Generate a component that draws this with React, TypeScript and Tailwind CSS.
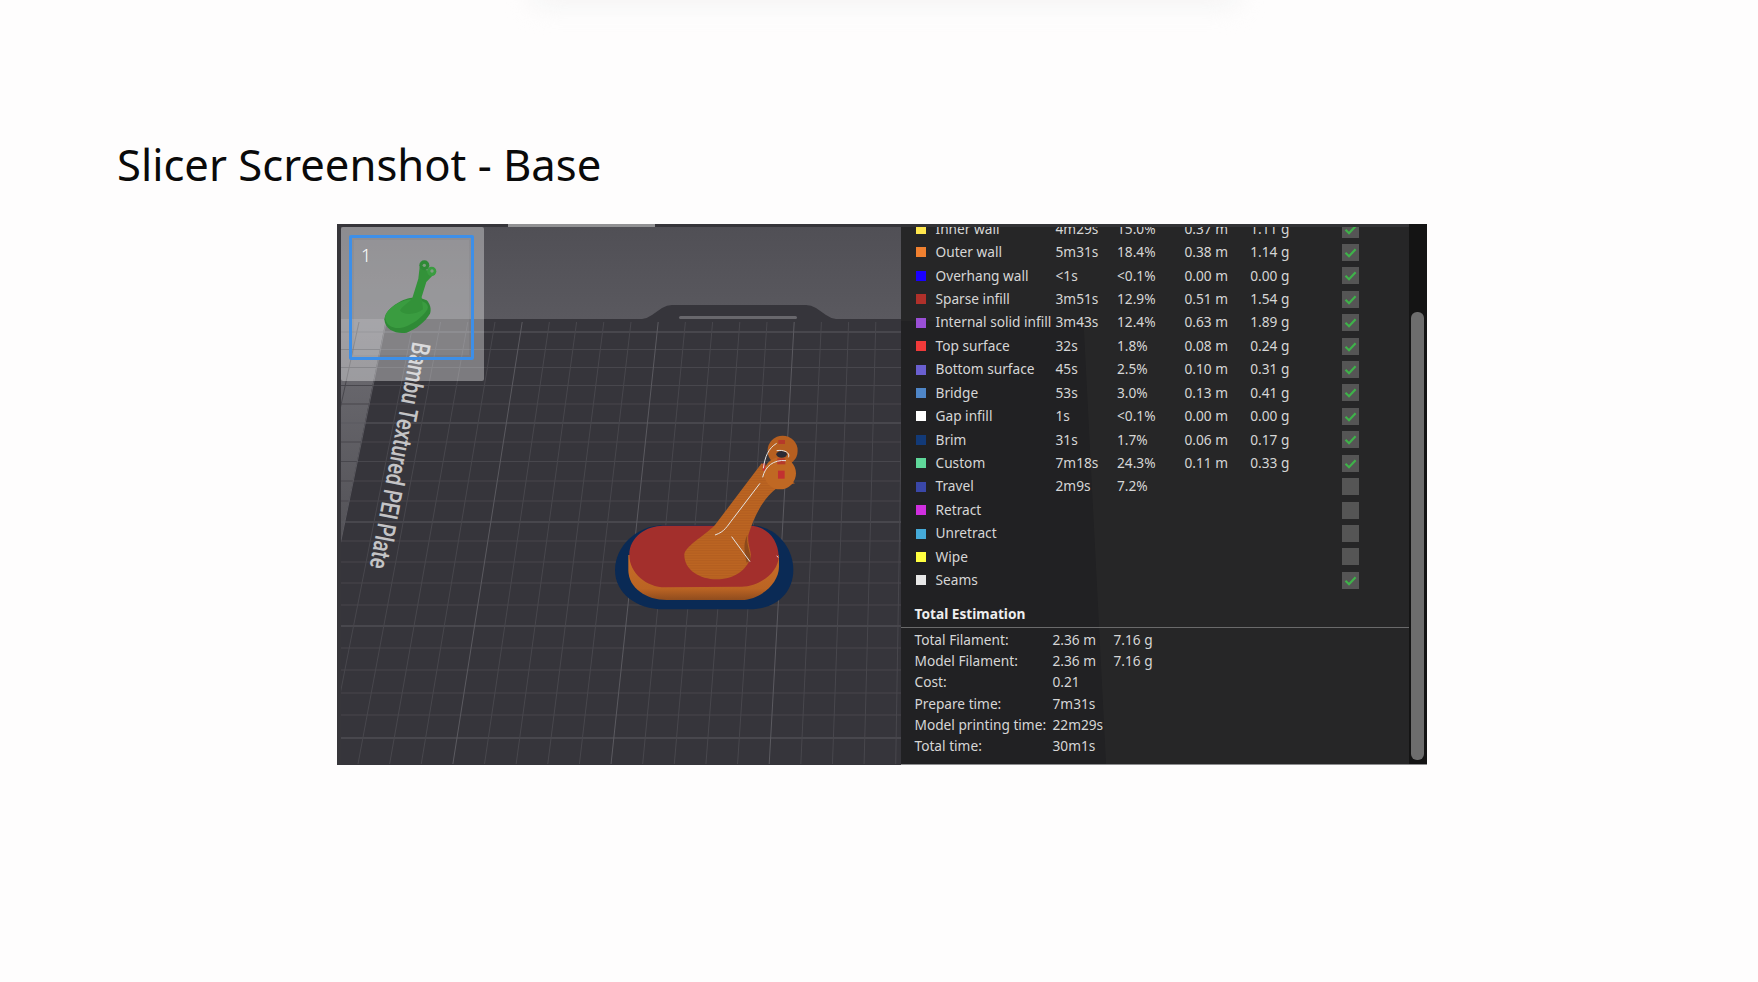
const SANS = "font-['Noto_Sans',sans-serif]";

const rows: [string, string, string, string, string, string, boolean][] = [
  ["Inner wall", "#ffe64d", "4m29s", "15.0%", "0.37 m", "1.11 g", true],
  ["Outer wall", "#f08030", "5m31s", "18.4%", "0.38 m", "1.14 g", true],
  ["Overhang wall", "#1a00ff", "<1s", "<0.1%", "0.00 m", "0.00 g", true],
  ["Sparse infill", "#b0302a", "3m51s", "12.9%", "0.51 m", "1.54 g", true],
  ["Internal solid infill", "#9a4fd6", "3m43s", "12.4%", "0.63 m", "1.89 g", true],
  ["Top surface", "#f03a3a", "32s", "1.8%", "0.08 m", "0.24 g", true],
  ["Bottom surface", "#6a5fd0", "45s", "2.5%", "0.10 m", "0.31 g", true],
  ["Bridge", "#4f86c8", "53s", "3.0%", "0.13 m", "0.41 g", true],
  ["Gap infill", "#ffffff", "1s", "<0.1%", "0.00 m", "0.00 g", true],
  ["Brim", "#123a78", "31s", "1.7%", "0.06 m", "0.17 g", true],
  ["Custom", "#5fd89a", "7m18s", "24.3%", "0.11 m", "0.33 g", true],
  ["Travel", "#3a47a8", "2m9s", "7.2%", "", "", false],
  ["Retract", "#d02fdf", "", "", "", "", false],
  ["Unretract", "#45aad8", "", "", "", "", false],
  ["Wipe", "#ffff40", "", "", "", "", false],
  ["Seams", "#e8e8e8", "", "", "", "", true],
];

const totals: [string, string, string][] = [
  ["Total Filament:", "2.36 m", "7.16 g"],
  ["Model Filament:", "2.36 m", "7.16 g"],
  ["Cost:", "0.21", ""],
  ["Prepare time:", "7m31s", ""],
  ["Model printing time:", "22m29s", ""],
  ["Total time:", "30m1s", ""],
];

const hLines = [332, 349.5, 367.5, 385.5, 404, 423, 442, 461.5, 481, 501, 522, 541, 562, 583, 605, 626, 648, 670, 693, 715, 738];
const vLines = Array.from({ length: 22 }, (_, k) => k - 5);

function Viewport() {
  return (
    <svg viewBox="337 224 564 541" className="block h-[541px] w-[564px]">
      <defs>
        <linearGradient id="upper" x1="0" y1="0" x2="0" y2="1">
          <stop offset="0" stopColor="#504f55" />
          <stop offset="1" stopColor="#5a595f" />
        </linearGradient>
        <linearGradient id="wedge" x1="0" y1="0" x2="0" y2="1">
          <stop offset="0" stopColor="#6f6e74" />
          <stop offset="1" stopColor="#535257" />
        </linearGradient>
        <linearGradient id="side" x1="0" y1="0" x2="0" y2="1">
          <stop offset="0" stopColor="#c86e28" />
          <stop offset="0.75" stopColor="#bb6423" />
          <stop offset="1" stopColor="#8f4c1e" />
        </linearGradient>
        <clipPath id="plate">
          <rect x="341" y="322" width="560" height="443" />
        </clipPath>
        <pattern id="hatch" width="3" height="3" patternUnits="userSpaceOnUse">
          <rect width="3" height="3" fill="#9f2b2b" />
          <rect width="3" height="1" fill="#ab372c" />
        </pattern>
        <pattern id="layers" width="5" height="5" patternUnits="userSpaceOnUse">
          <rect width="5" height="5" fill="#bd6622" />
          <rect width="5" height="1.6" fill="#ad5a1e" />
        </pattern>
      </defs>
      <rect x="337" y="224" width="564" height="541" fill="#36353b" />
      <rect x="337" y="224" width="564" height="95" fill="url(#upper)" />
      <rect x="337" y="224" width="4" height="541" fill="#37363b" />
      <rect x="337" y="224" width="564" height="3" fill="#36353a" />
      <rect x="508" y="224" width="147" height="3" fill="#929294" />
      <polygon points="341,319 386,319 341,540" fill="url(#wedge)" />
      <path d="M642 319 Q648 318 652 315 L662 308 Q667 305 672 305 L806 305 Q811 305 816 308 L826 315 Q830 318 836 319 Z" fill="#36353b" />
      <rect x="679" y="316" width="118" height="3" rx="1.5" fill="#68676c" />
      <g clipPath="url(#plate)" strokeWidth="1" fill="none">
        {hLines.map((y, k) => (
          <line key={y} x1="341" x2="901" y1={y} y2={y} stroke={k % 5 === 0 ? "#5b5a60" : "#48474d"} />
        ))}
        {vLines.map((i) => (
          <line
            key={i}
            x1={495 + 27.2 * i}
            y1="322"
            x2={358 + 31.63 * (i + 2)}
            y2="764"
            stroke={(i + 4) % 5 === 0 ? "#5b5a60" : "#48474d"}
          />
        ))}
      </g>
      <text
        transform="translate(412.7 341) rotate(100.8)"
        textLength="230"
        lengthAdjust="spacingAndGlyphs"
        fontFamily="Roboto, sans-serif"
        fontWeight="500"
        fontSize="26"
        fill="#c4c4c6"
      >
        Bambu Textured PEI Plate
      </text>
      <g transform="translate(600 420) scale(0.3333)">
        <path d="M45 450 C45 380 110 316 190 316 L450 316 C525 316 580 380 580 450 C580 520 525 568 450 568 L190 568 C110 568 45 520 45 450 Z" fill="#0a2a55" />
        <path d="M85 405 L85 450 C85 505 140 540 200 540 L425 540 C480 540 537 490 537 440 L537 405 Z" fill="url(#side)" />
        <path d="M88 405 C88 350 140 317 190 317 L450 317 C500 317 536 360 536 410 C536 455 480 500 425 500 L195 502 C140 502 88 460 88 405 Z" fill="url(#hatch)" />
        <path d="M253 405 C253 380 310 350 345 315 L485 130 L585 190 L530 205 C495 230 465 280 445 345 C442 375 455 395 452 410 C440 455 395 478 350 478 C300 478 253 450 253 405 Z" fill="url(#layers)" />
        <path d="M442 345 C438 375 452 395 452 420 L440 428 C432 390 430 370 442 345 Z" fill="#8c4a1c" />
        <circle cx="548" cy="92" r="45" fill="#b65f20" />
        <circle cx="540" cy="160" r="48" fill="#c06823" />
        <ellipse cx="545" cy="103" rx="16" ry="10" fill="#2a2a35" />
        <rect x="532" y="115" width="24" height="18" fill="#b53a2a" />
        <rect x="534" y="152" width="20" height="24" fill="#c23030" />
        <rect x="535" y="60" width="20" height="12" fill="#b53a2a" />
        <rect x="488" y="130" width="8" height="22" fill="#c23030" />
        <g fill="none" stroke="#e4e4e4" strokeWidth="3">
          <path d="M345 345 C375 335 380 320 400 295 L480 190" />
          <path d="M395 350 L450 425" />
          <path d="M490 145 C495 110 505 85 530 70" />
          <path d="M530 92 C555 88 572 100 565 112" />
          <path d="M488 172 C495 140 520 118 558 122" />
          <path d="M530 408 L535 412" />
        </g>
      </g>
    </svg>
  );
}

function ThumbModel() {
  return (
    <svg viewBox="0 0 143 154" className="h-[154px] w-[143px]">
      <g transform="translate(-6 -5) scale(0.3333)">
        <path d="M148 292 C150 265 190 235 225 228 L248 225 L275 235 C285 245 290 262 285 275 C270 300 245 320 215 332 C185 337 150 325 148 292 Z" fill="#2f8a36" />
        <path d="M150 285 C155 260 190 238 225 232 L262 238 C280 245 285 258 270 272 C250 295 225 312 195 318 C170 320 152 308 150 285 Z" fill="#3a9c40" />
        <path d="M195 265 C205 250 225 240 232 228 L250 170 L254 135 L298 155 L274 180 L260 225 L264 262 C245 278 205 282 195 265 Z" fill="#339239" />
        <circle cx="268" cy="130" r="15" fill="#2f8a36" />
        <circle cx="290" cy="148" r="14" fill="#3a9c40" />
        <circle cx="268" cy="130" r="5" fill="#7f9f80" />
        <circle cx="291" cy="147" r="5" fill="#7f9f80" />
      </g>
    </svg>
  );
}

function Checkbox({ on }: { on: boolean }) {
  return (
    <div className="flex h-[17px] w-[17px] items-center justify-center bg-[#555555]">
      {on && (
        <svg viewBox="0 0 17 17" className="h-[17px] w-[17px]">
          <path d="M3.5 8.8 L7 12.2 L13.6 5.2" fill="none" stroke="#3fb24a" strokeWidth="2.2" />
        </svg>
      )}
    </div>
  );
}

function Panel() {
  return (
    <div className={`relative flex flex-1 overflow-hidden bg-[#262627] text-[13.7px] text-[#d6d6d6] ${SANS}`}>
      <div className="absolute bottom-0 left-0 top-[97px] w-[205px] bg-[#212123] [clip-path:polygon(0_0,89%_0,100%_100%,0_100%)]" />
      <div className="relative flex min-w-0 flex-1 flex-col">
        <div className="h-[3px] shrink-0 bg-[#333336]" />
        <div className="relative min-h-0 flex-1 overflow-hidden">
          <div className="mt-[-9.7px]">
            {rows.map(([name, color, time, pct, len, wt, on]) => (
              <div
                key={name}
                className="grid h-[23.43px] grid-cols-[20px_120px_61.5px_67.5px_65.7px_92px_17px] items-center pl-[14.5px]"
              >
                <div className="h-[10px] w-[10px]" style={{ backgroundColor: color }} />
                <div className="whitespace-nowrap">{name}</div>
                <div>{time}</div>
                <div>{pct}</div>
                <div>{len}</div>
                <div>{wt}</div>
                <Checkbox on={on} />
              </div>
            ))}
          </div>
          <div className="mt-[8.6px] h-[26px] pl-[13.5px] font-bold leading-[26px] text-[#eeeeee]">Total Estimation</div>
          <div className="h-px bg-[#6a6a6b]" />
          <div className="pt-[2px]">
            {totals.map(([label, a, b]) => (
              <div key={label} className="grid h-[21.2px] grid-cols-[138px_61px_60px] items-center pl-[13.5px]">
                <div className="whitespace-nowrap">{label}</div>
                <div>{a}</div>
                <div>{b}</div>
              </div>
            ))}
          </div>
        </div>
      </div>
      <div className="relative flex w-[17.5px] shrink-0 flex-col bg-[#141414] pb-[4px] pl-[2.4px] pr-[2.7px] pt-[87.5px]">
        <div className="flex-1 rounded-[6px] bg-[#6d6d6d]" />
      </div>
    </div>
  );
}

export default function App() {
  return (
    <div className="relative h-[982px] w-full overflow-hidden bg-[#fefdfd]">
      <div className="absolute left-[530px] top-[-18px] h-[24px] w-[710px] rounded-full bg-[#f4f4f4] blur-md" />
      <h1 className={`ml-[117px] pt-[134px] text-[43.6px] font-normal leading-[60px] text-[#0a0a0a] ${SANS}`}>
        Slicer Screenshot - Base
      </h1>
      <div className="ml-[337px] mt-[30px] flex h-[541px] w-[1089.5px] border-b border-[#8d8d8f]">
        <div className="relative w-[564px] shrink-0">
          <Viewport />
          <div className="absolute left-[4px] top-[3px] h-[154px] w-[143px] rounded-[2px] bg-white/35">
            <div className="absolute left-[8px] top-[8px] h-[124.5px] w-[124.5px] rounded-[2px] border-[3px] border-[#3d8fe8] p-[2px]">
              <div className="h-full w-full bg-white/5" />
            </div>
            <div className="absolute left-[20px] top-[16px] font-['Noto_Sans',sans-serif] text-[18px] font-light leading-[24px] text-white">1</div>
            <div className="absolute left-0 top-0">
              <ThumbModel />
            </div>
          </div>
        </div>
        <Panel />
      </div>
    </div>
  );
}
